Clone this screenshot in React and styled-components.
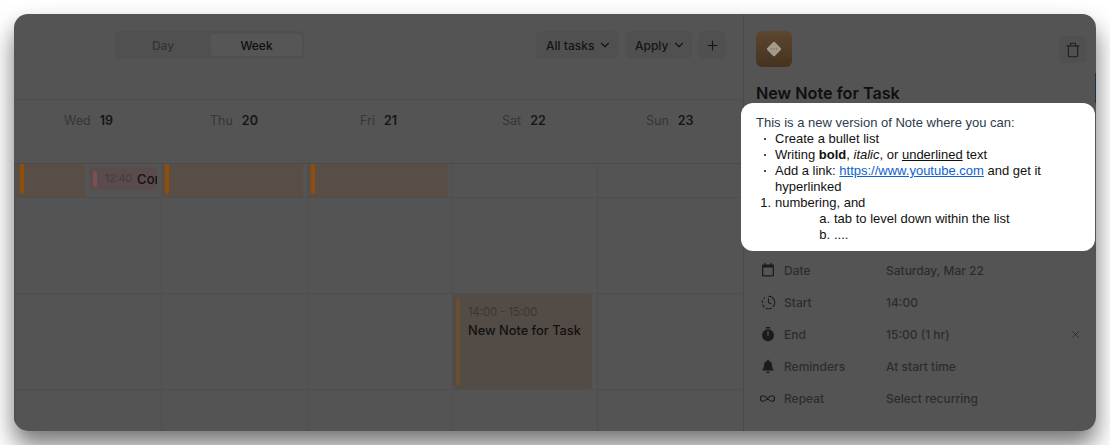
import React from 'react';
import styled, { createGlobalStyle } from 'styled-components';
import { ChevronDown, Plus, Trash, X, ClockFading, Infinity as InfinityIcon } from 'lucide-react';

const Global = createGlobalStyle`
  html, body {
    margin: 0;
    background: #fff;
    font-family: Inter, "Liberation Sans", sans-serif;
  }
  * { box-sizing: border-box; }
`;

const Page = styled.div`
  width: 1110px;
  height: 445px;
  padding: 14px;
  overflow: hidden;
`;

const Shadow = styled.div`
  border-radius: 14px;
  box-shadow: 0 14px 24px rgba(0, 0, 0, 0.55);
`;

const Window = styled.div`
  position: relative;
  width: 1082px;
  height: 417px;
  display: flex;
  background: #545454;
  border-radius: 14px;
  overflow: hidden;
`;

const Main = styled.div`
  width: 729px;
  display: flex;
  flex-direction: column;
  flex-shrink: 0;
`;

const TopBar = styled.div`
  height: 86px;
  display: flex;
  align-items: flex-start;
  padding: 17px 17px 0 101px;
  border-bottom: 1px solid #4e4e4e;
`;

const Toggle = styled.div`
  width: 189px;
  height: 28px;
  padding: 3px 2px 3px 0;
  display: flex;
  background: #505050;
  border-radius: 5px;
  margin-right: auto;
`;

const ToggleItem = styled.div`
  width: ${(props) => props.$width}px;
  display: flex;
  align-items: center;
  justify-content: center;
  border-radius: 3px;
  font-size: 12px;
  font-weight: 500;
  background: ${(props) => (props.$active ? '#565656' : 'transparent')};
  color: ${(props) => (props.$active ? '#0f0f0f' : '#343434')};
`;

const Actions = styled.div`
  display: flex;
  gap: 6px;
`;

const ActionButton = styled.div`
  width: ${(props) => props.$width}px;
  height: 28px;
  display: flex;
  align-items: center;
  gap: 4px;
  padding-left: 10px;
  border-radius: 6px;
  background: #505050;
  color: #141414;
  font-size: 12px;
  font-weight: 500;
`;

const PlusButton = styled(ActionButton)`
  justify-content: center;
  padding-left: 0;
`;

const DayRow = styled.div`
  height: 64px;
  display: grid;
  grid-template-columns: 148px 146px 145px 145px 145px;
  border-bottom: 1px solid #4a4a4a;
`;

const DayCell = styled.div`
  padding: 13px 0 0 ${(props) => props.$inset}px;
  font-size: 12.5px;
  line-height: 16px;
  color: #363636;
  display: flex;
  gap: 9px;
`;

const DayNumber = styled.span`
  font-weight: 600;
  color: #151515;
`;

const CalendarGrid = styled.div`
  flex: 1;
  display: grid;
  grid-template-columns: 148px 146px 145px 145px 145px;
  grid-template-rows: 34px 96px 96px 1fr;
`;

const Cell = styled.div`
  position: relative;
  display: flex;
  border-right: ${(props) => (props.$last ? 'none' : '1px solid #4e4e4e')};
  border-bottom: ${(props) => (props.$end ? 'none' : '1px solid #4e4e4e')};
  border-left: ${(props) => (props.$first ? '2px solid #505050' : 'none')};
`;

const Band = styled.div`
  width: ${(props) => props.$width}px;
  height: 33px;
  padding-left: ${(props) => props.$inset}px;
  background: #594e46;
  flex-shrink: 0;
`;

const BandBar = styled.div`
  width: 4px;
  height: 30px;
  background: #8f4f0a;
  border-radius: 0 0 2px 2px;
`;

const Chip = styled.div`
  width: 68px;
  height: 23px;
  margin: 3px 0 0 4px;
  display: flex;
  align-items: center;
  padding-left: 4px;
  overflow: hidden;
  border-radius: 4px;
  background: #5a4c4c;
  font-size: 13px;
  color: #111;
  white-space: nowrap;
  font-weight: 500;
`;

const ChipBar = styled.div`
  width: 4px;
  height: 16px;
  border-radius: 2px;
  background: #7a5050;
  flex-shrink: 0;
`;

const ChipTime = styled.span`
  font-size: 10.5px;
  font-weight: 400;
  color: #413a3a;
  margin: 0 5px 0 8px;
`;

const EventCard = styled.div`
  position: absolute;
  top: 0;
  left: 0;
  width: 139px;
  height: 95px;
  z-index: 1;
  padding: 4px 0 0 3px;
  display: flex;
  gap: 8px;
  border-radius: 4px;
  background: #534b45;
`;

const EventBar = styled.div`
  width: 4px;
  height: 88px;
  border-radius: 2px;
  background: #6b4e2f;
  flex-shrink: 0;
`;

const EventText = styled.div`
  padding-top: 6px;
`;

const EventTime = styled.div`
  font-size: 11.2px;
  line-height: 16px;
  color: #3a3733;
`;

const EventTitle = styled.div`
  margin-top: 3px;
  font-size: 12.8px;
  line-height: 16px;
  font-weight: 500;
  color: #111;
  white-space: nowrap;
`;

const Side = styled.div`
  flex: 1;
  padding: 17px 9px 0 12px;
  border-left: 1px solid #4b4b4b;
`;

const SideTop = styled.div`
  display: flex;
  justify-content: space-between;
`;

const TaskIcon = styled.div`
  width: 36px;
  height: 36px;
  display: flex;
  align-items: center;
  justify-content: center;
  border-radius: 6px;
  background: linear-gradient(180deg, #5e4630, #45331f);
`;

const TrashButton = styled.div`
  width: 28px;
  height: 27px;
  margin-top: 5px;
  display: flex;
  align-items: center;
  justify-content: center;
  border-radius: 5px;
  background: #505050;
  color: #1d1d1d;
`;

const Title = styled.h1`
  margin: 16px 0 0;
  font-size: 16.2px;
  line-height: 20px;
  font-weight: 600;
  color: #0f0f0f;
`;

const Props = styled.div`
  margin-top: 151px;
`;

const PropRow = styled.div`
  height: 32px;
  display: flex;
  align-items: center;
  font-size: 12px;
  color: #2d2d2d;
`;

const PropIcon = styled.div`
  width: 28px;
  display: flex;
  padding-left: 5px;
  color: #1c1c1c;
`;

const PropLabel = styled.div`
  width: 102px;
  font-weight: 500;
`;

const PropValue = styled.div`
  flex: 1;
  font-weight: 500;
`;

const ClearIcon = styled.div`
  margin-right: 6px;
  display: flex;
  color: #232323;
`;

const EdgeMark = styled.div`
  position: absolute;
  top: 59px;
  right: 0;
  width: 1px;
  height: 30px;
  background: #1d3246;
`;

const Note = styled.div`
  position: absolute;
  left: 727px;
  top: 89px;
  width: 354px;
  height: 148px;
  z-index: 2;
  padding: 12px 15px;
  border-radius: 12px;
  background: #fff;
  font-family: "Liberation Sans", Arial, sans-serif;
  font-size: 13px;
  line-height: 16px;
  color: #111;
`;

const NoteIntro = styled.div`
  color: #2c3b4d;
`;

const NoteLine = styled.div`
  display: flex;
  padding-left: ${(props) => props.$indent || 0}px;
`;

const Marker = styled.span`
  width: 19px;
  flex-shrink: 0;
  text-align: right;
  padding-right: 4px;
`;

const Bullet = styled.span`
  width: 19px;
  flex-shrink: 0;
  display: flex;
  align-items: center;
  padding-left: 8px;

  &::before {
    content: '';
    width: 2px;
    height: 2px;
    border-radius: 50%;
    background: #111;
  }
`;

const BulletTop = styled(Bullet)`
  align-items: flex-start;

  &::before {
    margin-top: 7px;
  }
`;

const Under = styled.span`
  text-decoration: underline;
`;

const Link = styled.a`
  color: #0b63ce;
  text-decoration: underline;
`;

const CalendarIcon = () => (
  <svg width="14" height="14" viewBox="0 0 14 14" fill="currentColor">
    <path d="M3 0h1.300v1.500h5.400V0H11v1.500h.8c.9 0 1.200.4 1.200 1.200v9.600c0 .9-.4 1.200-1.200 1.200H2.200C1.300 13.500 1 13.100 1 12.300V2.700c0-.8.3-1.200 1.200-1.200H3zM2.300 4.600v7.600h9.400V4.600z" />
  </svg>
);

const TimerIcon = () => (
  <svg width="14" height="15" viewBox="0 0 14 15" fill="currentColor">
    <rect x="4.800" y="0" width="4.400" height="1.400" rx=".5" />
    <path d="M7 2.200a6 6 0 1 1 0 12 6 6 0 0 1 0-12zm-.6 2v4.600h1.200V4.200z" />
  </svg>
);

const BellIcon = () => (
  <svg width="14" height="15" viewBox="0 0 14 15" fill="currentColor">
    <path d="M7 .5c.5 0 .9.400.9.900v.5c2 .5 3.100 2.100 3.100 4.300 0 2.400.6 3.500 1.700 4.500.3.300.2.900-.3.900H1.600c-.5 0-.6-.6-.3-.9C2.400 9.700 3 8.600 3 6.200c0-2.200 1.100-3.800 3.100-4.300v-.5c0-.5.400-.9.900-.9zM5.400 12.600h3.200c0 .9-.7 1.700-1.600 1.700s-1.600-.8-1.600-1.700z" />
  </svg>
);

const DiamondIcon = () => (
  <svg width="18" height="18" viewBox="0 0 18 18">
    <rect x="3.500" y="3.500" width="11" height="11" rx="1.500" transform="rotate(45 9 9)" fill="#a39a8f" />
    <circle cx="6.500" cy="9" r=".7" fill="#7d6a58" />
    <circle cx="9" cy="9" r=".7" fill="#7d6a58" />
    <circle cx="11.500" cy="9" r=".7" fill="#7d6a58" />
  </svg>
);

const days = [
  { name: 'Wed', num: 19, inset: 50 },
  { name: 'Thu', num: 20, inset: 48 },
  { name: 'Fri', num: 21, inset: 52 },
  { name: 'Sat', num: 22, inset: 49 },
  { name: 'Sun', num: 23, inset: 48 },
];

const rows = [
  { label: 'Date', value: 'Saturday, Mar 22', icon: <CalendarIcon /> },
  { label: 'Start', value: '14:00', icon: <ClockFading size={15} strokeWidth={1.7} /> },
  { label: 'End', value: '15:00 (1 hr)', icon: <TimerIcon />, clear: true },
  { label: 'Reminders', value: 'At start time', icon: <BellIcon /> },
  { label: 'Repeat', value: 'Select recurring', icon: <InfinityIcon size={17} strokeWidth={1.5} style={{ marginLeft: -2 }} /> },
];

const App = () => {
  return (
    <Page>
      <Global />
      <Shadow>
        <Window>
          <Main>
            <TopBar>
              <Toggle>
                <ToggleItem $width={96}>Day</ToggleItem>
                <ToggleItem $width={91} $active>Week</ToggleItem>
              </Toggle>
              <Actions>
                <ActionButton $width={83}>All tasks <ChevronDown size={14} strokeWidth={2} /></ActionButton>
                <ActionButton $width={67}>Apply <ChevronDown size={14} strokeWidth={2} /></ActionButton>
                <PlusButton $width={28}><Plus size={15} strokeWidth={1.8} /></PlusButton>
              </Actions>
            </TopBar>
            <DayRow>
              {days.map((day) => (
                <DayCell key={day.num} $inset={day.inset}>
                  {day.name} <DayNumber>{day.num}</DayNumber>
                </DayCell>
              ))}
            </DayRow>
            <CalendarGrid>
              <Cell $first>
                <Band $width={69} $inset={4}><BandBar /></Band>
                <Chip>
                  <ChipBar />
                  <ChipTime>12:40</ChipTime>
                  Cor
                </Chip>
              </Cell>
              <Cell>
                <Band $width={141} $inset={3}><BandBar /></Band>
              </Cell>
              <Cell>
                <Band $width={140} $inset={3}><BandBar /></Band>
              </Cell>
              <Cell />
              <Cell $last />

              <Cell $first />
              <Cell />
              <Cell />
              <Cell />
              <Cell $last />

              <Cell $first />
              <Cell />
              <Cell />
              <Cell>
                <EventCard>
                  <EventBar />
                  <EventText>
                    <EventTime>14:00 - 15:00</EventTime>
                    <EventTitle>New Note for Task</EventTitle>
                  </EventText>
                </EventCard>
              </Cell>
              <Cell $last />

              <Cell $first $end />
              <Cell $end />
              <Cell $end />
              <Cell $end />
              <Cell $last $end />
            </CalendarGrid>
          </Main>
          <Side>
            <SideTop>
              <TaskIcon><DiamondIcon /></TaskIcon>
              <TrashButton><Trash size={16} strokeWidth={1.6} /></TrashButton>
            </SideTop>
            <Title>New Note for Task</Title>
            <Props>
              {rows.map((row) => (
                <PropRow key={row.label}>
                  <PropIcon>{row.icon}</PropIcon>
                  <PropLabel>{row.label}</PropLabel>
                  <PropValue>{row.value}</PropValue>
                  {row.clear && <ClearIcon><X size={11} strokeWidth={1.5} /></ClearIcon>}
                </PropRow>
              ))}
            </Props>
          </Side>
          <EdgeMark />
          <Note>
            <NoteIntro>This is a new version of Note where you can:</NoteIntro>
            <NoteLine><Bullet />Create a bullet list</NoteLine>
            <NoteLine><Bullet /><span>Writing <b>bold</b>, <i>italic</i>, or <Under>underlined</Under> text</span></NoteLine>
            <NoteLine><BulletTop /><span>Add a link: <Link href="#">https://www.youtube.com</Link> and get it hyperlinked</span></NoteLine>
            <NoteLine><Marker>1.</Marker>numbering, and</NoteLine>
            <NoteLine $indent={59}><Marker>a.</Marker>tab to level down within the list</NoteLine>
            <NoteLine $indent={59}><Marker>b.</Marker>....</NoteLine>
          </Note>
        </Window>
      </Shadow>
    </Page>
  );
};

export default App;
